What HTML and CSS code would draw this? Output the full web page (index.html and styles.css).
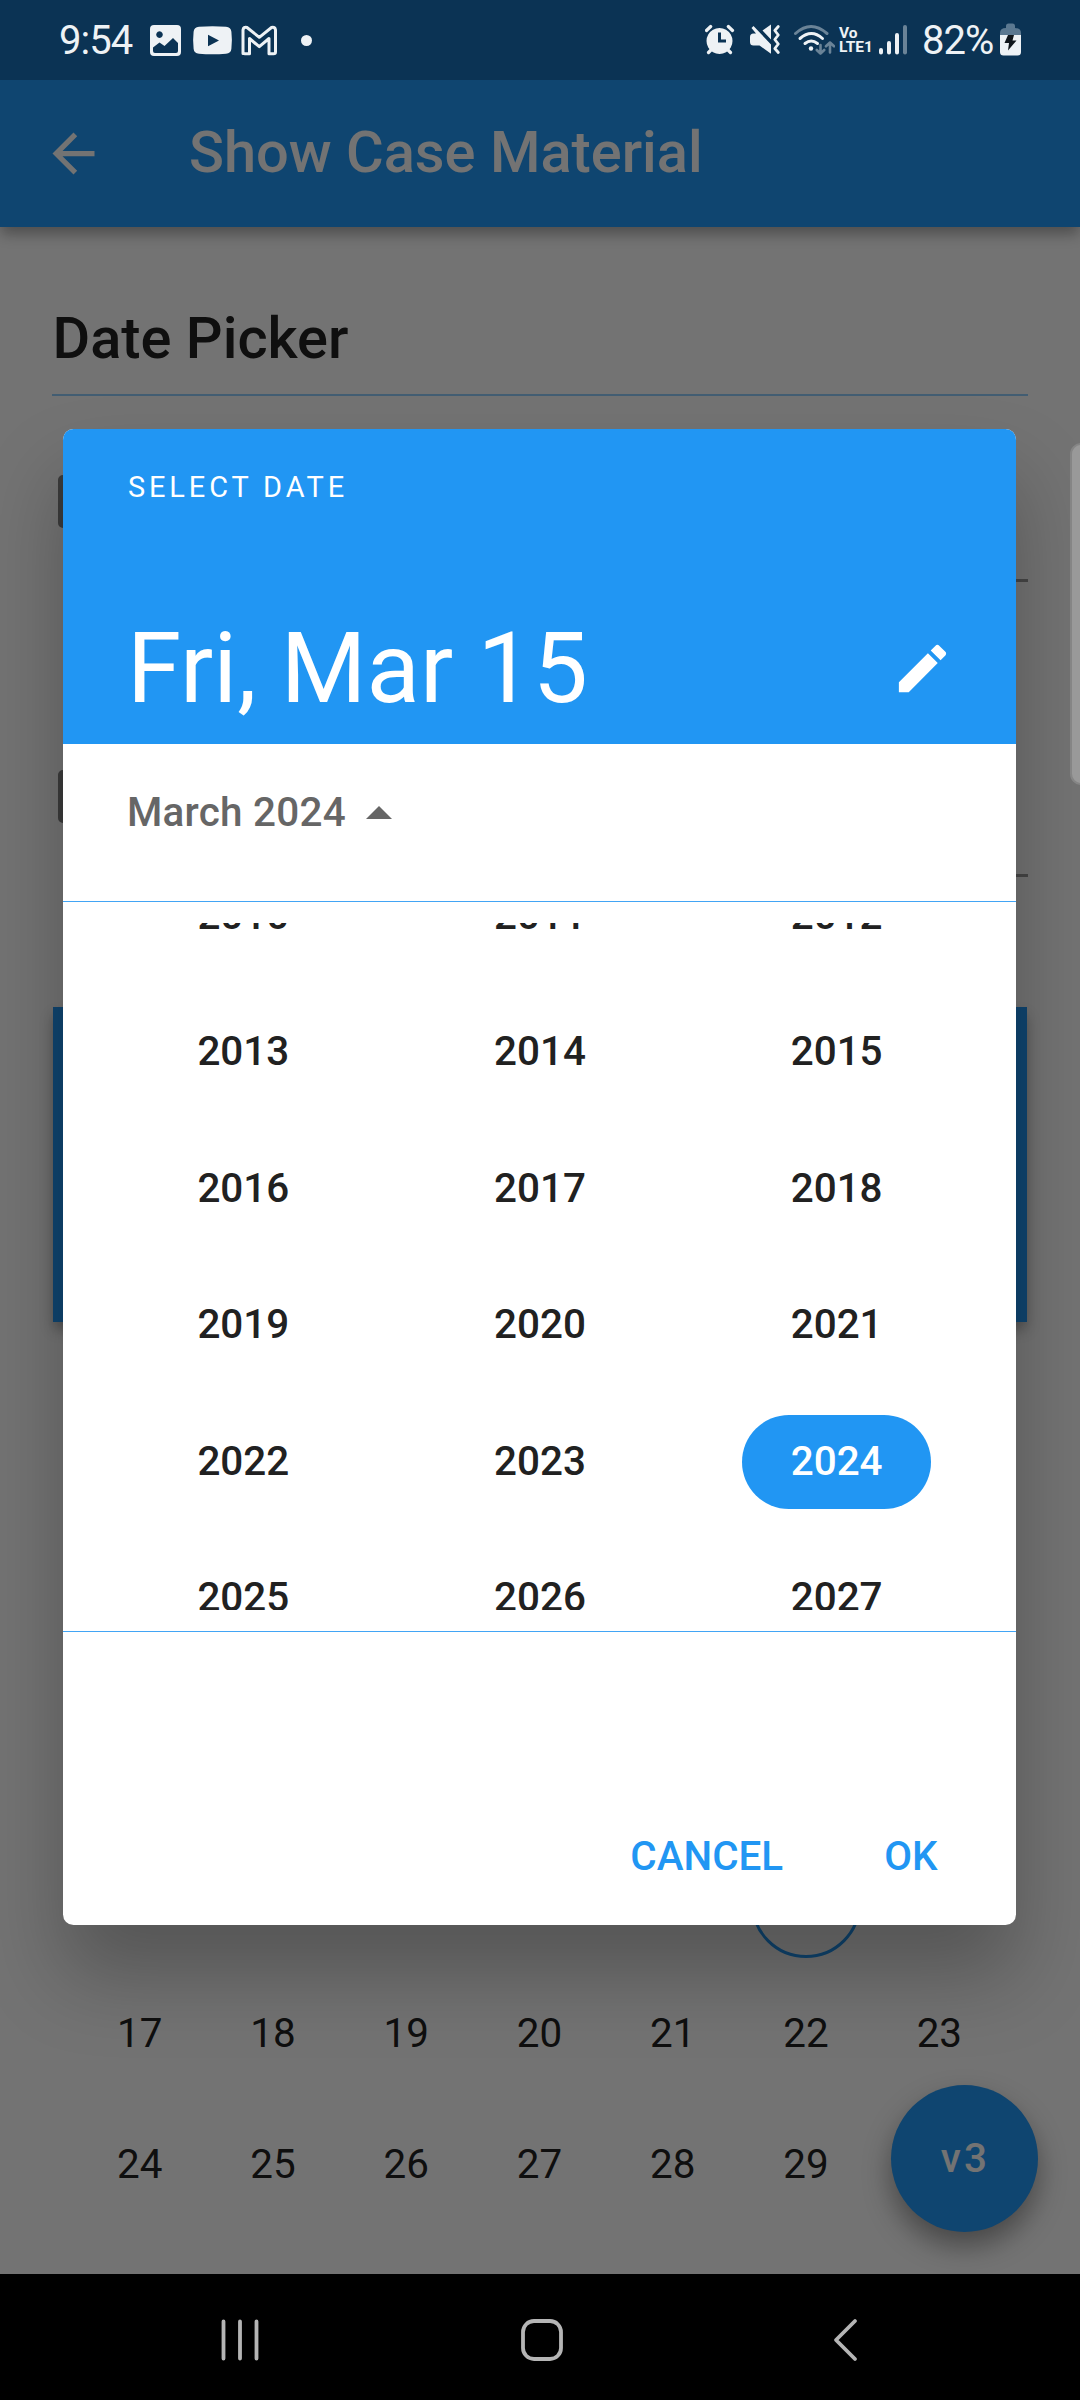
FILE: index.html
```html
<!DOCTYPE html>
<html lang="en">
<head>
<meta charset="utf-8">
<title>Show Case Material</title>
<link rel="stylesheet" href="styles.css">
</head>
<body>
<div class="screen">
  <div class="app">
    <header class="app-bar">
      <svg class="icon-24" viewBox="0 0 24 24"><path d="M20 11H7.83l5.59-5.59L12 4l-8 8 8 8 1.41-1.41L7.83 13H20v-2z"/></svg>
      <h1 class="app-title">Show Case Material</h1>
    </header>
    <main class="content">
      <h2 class="section-title">Date Picker</h2>
      <div class="field"><span class="field-icon"></span><span class="field-line"></span></div>
      <div class="field"><span class="field-icon"></span><span class="field-line"></span></div>
      <section class="calendar">
        <div class="calendar-header"></div>
        <div class="calendar-grid">
          <span class="day today"></span>
          <span class="day first">17</span><span class="day">18</span><span class="day">19</span><span class="day">20</span><span class="day">21</span><span class="day">22</span><span class="day">23</span>
          <span class="day">24</span><span class="day">25</span><span class="day">26</span><span class="day">27</span><span class="day">28</span><span class="day">29</span>
        </div>
      </section>
    </main>
    <button class="fab">v3</button>
  </div>

  <div class="scrim">
    <section class="dialog">
      <header class="dialog-header">
        <div class="dialog-label">SELECT DATE</div>
        <div class="dialog-date-row">
          <div class="dialog-date">Fri, Mar 15</div>
          <svg class="icon-24" viewBox="0 0 24 24"><path d="M3 17.25V21h3.75L17.81 9.94l-3.75-3.75L3 17.25zM20.71 7.04c.39-.39.39-1.02 0-1.41l-2.34-2.34c-.39-.39-1.02-.39-1.41 0l-1.83 1.83 3.75 3.75 1.83-1.83z"/></svg>
        </div>
      </header>
      <div class="month-row">
        <span>March 2024</span>
        <svg class="month-arrow" viewBox="0 0 26 13"><path d="M0 13L13 0l13 13z"/></svg>
      </div>
      <div class="years">
        <div class="years-scroll">
          <div class="years-grid">
            <span class="year">2010</span><span class="year">2011</span><span class="year">2012</span>
            <span class="year">2013</span><span class="year">2014</span><span class="year">2015</span>
            <span class="year">2016</span><span class="year">2017</span><span class="year">2018</span>
            <span class="year">2019</span><span class="year">2020</span><span class="year">2021</span>
            <span class="year">2022</span><span class="year">2023</span><span class="year selected">2024</span>
            <span class="year">2025</span><span class="year">2026</span><span class="year">2027</span>
          </div>
        </div>
      </div>
      <footer class="actions"><button class="action">CANCEL</button><button class="action">OK</button></footer>
    </section>
  </div>

  <div class="status-bar">
    <div class="status-left">
      <span class="clock">9:54</span>
      <svg class="status-svg" width="134" height="40" viewBox="150 20 134 40">
        <path fill-rule="evenodd" d="M154 25h23a4 4 0 0 1 4 4v23a4 4 0 0 1-4 4h-23a4 4 0 0 1-4-4v-23a4 4 0 0 1 4-4zM159.500 31.300a3.300 3.300 0 1 0 .01 0zM153 47.500V51q0 2 2 2h21q2 0 2-2v-8l-5-5-8.500 8-5-3.500z"/>
        <path fill-rule="evenodd" d="M199 26.800q13.500-1 27 0 5 .3 5.400 5 1 8.500 0 17-.4 4.700-5.400 5-13.500 1-27 0-5-.3-5.400-5-1-8.500 0-17 .4-4.700 5.400-5zM208 34.800v11.400l11-5.700z"/>
        <path class="line" stroke-width="3" d="M243 53.500V30q.5-3.500 4-2.500l12.300 9.800L271.500 27.500q3.500-1 4 2.500v22q0 1.800-2 1.800h-4.500V38.500L259.300 46.700 249.500 38.500V53.800H245q-2 0-2-2z"/>
      </svg>
      <span class="status-dot"></span>
    </div>
    <div class="status-right">
      <svg class="status-svg" width="130" height="40" viewBox="705 20 130 40">
        <path fill-rule="evenodd" d="M719.500 28a13 13 0 1 0 .01 0zM718 32.500h3v7h5v3h-8z"/>
        <path class="line" stroke-width="3.200" d="M706.500 30.500l4.200-4M732.500 30.500l-4.200-4M708.500 52.500l3-3M730.500 52.500l-3-3"/>
        <path d="M750 37q0-3.500 3.500-3.500h2.500L751.500 28l2-2L771 44.500v9.200l-11.500-8.200h-6q-3.500 0-3.500-3.500zM762.500 30.500l8.500-6v15z"/>
        <path class="line" stroke-width="2.800" d="M778.300 26.500l-3.500 4 3.500 4.500-3.500 4.500 3.500 4.500-3.500 4.500 3.500 4"/>
        <g class="line" stroke-width="3">
          <path class="dim" d="M795.500 33.500q15.500-14 31.500 0"/>
          <path d="M800 38.500q11.500-10 22.500 0"/>
          <path d="M805 43.500q6.200-5 12.500 0"/>
        </g>
        <circle cx="811" cy="48.500" r="2.200"/>
        <path class="line dim" stroke-width="2.600" d="M820.500 45v8.500M816.800 50l3.700 3.700 3.700-3.700M830 52.500V42.500M826 46.300l4-3.800 4 3.800"/>
      </svg>
      <span class="lte"><span>Vo</span><span>LTE1</span></span>
      <svg class="status-svg signal" width="28" height="40" viewBox="879 20 28 40">
        <path class="line" stroke-width="4" d="M881 50v2.500M889 43v9.500M897 35v17.500"/>
        <path class="line dim" stroke-width="4" d="M905 27v25.500"/>
      </svg>
      <span class="battery-text">82%</span>
      <svg class="status-svg" width="21" height="40" viewBox="1000 20 21 40">
        <path class="cell-empty" d="M1006 28v-2q0-2.500 2.500-2.500h4q2.500 0 2.500 2.500v2q6 0 6 5v2.500h-21V33q0-5 6-5z"/>
        <path d="M1000 35h21v17q0 3.500-3.500 3.500h-14q-3.500 0-3.500-3.500z"/>
        <path class="bolt" d="M1008 35h6l-1.500 5.500h4L1008 50.500l1-7.500h-4.500z"/>
      </svg>
    </div>
  </div>
  <div class="edge-handle"></div>

  <nav class="nav-bar">
    <svg class="nav-icon" viewBox="0 0 44 44"><path d="M5.500 3.500v37M22 3.500v37M38.500 3.500v37"/></svg>
    <svg class="nav-icon" viewBox="0 0 44 44"><rect x="2" y="3" width="38" height="38" rx="11"/></svg>
    <svg class="nav-icon" viewBox="0 0 44 44"><path d="M31 3L12 22l19 19"/></svg>
  </nav>
</div>
</body>
</html>
```
FILE: styles.css
```css
* { box-sizing: border-box; }
body {
  margin: 0;
  font-family: Roboto, "Liberation Sans", sans-serif;
  background: #000;
}
h1, h2 { margin: 0; font-weight: 500; }
button { border: 0; padding: 0; margin: 0; background: none; font: inherit; }
svg { display: block; flex: none; }

.screen {
  position: relative;
  width: 1080px;
  height: 2400px;
  display: flex;
  flex-direction: column;
  overflow: hidden;
}

/* page under the dialog */
.app {
  position: relative;
  height: 2274px;
  background: #fafafa;
  overflow: hidden;
}
.app-bar {
  position: relative;
  display: flex;
  align-items: center;
  gap: 84px;
  height: 227px;
  padding: 80px 42px 0;
  background: #2196f3;
  color: #fafafa;
  box-shadow: 0 8px 13px -1px rgba(0, 0, 0, .32);
}
.icon-24 { width: 63px; height: 63px; fill: currentColor; }
.app-title { font-size: 57.75px; line-height: 68px; padding-bottom: 3px; }

.content { padding: 0 52px; }
.section-title {
  padding: 77px 0 22px .5px;
  font-size: 57.75px;
  line-height: 68px;
  color: #212121;
  border-bottom: 2px solid #90caf9;
}
.field {
  display: flex;
  justify-content: space-between;
  height: 186px;
  padding: 79px 0 0 6px;
}
.field + .field { margin-top: 109px; }
.field-icon { width: 47px; height: 53px; border: 6px solid #808080; border-radius: 5px; }
.field-line { align-self: flex-end; width: 860px; height: 3px; background: #9a9a9a; }

.calendar { margin-top: 130px; }
.calendar-header {
  height: 315px;
  margin: 0 1px;
  background: #2196f3;
  box-shadow: 0 8px 13px -1px rgba(0, 0, 0, .32);
}
.calendar-grid {
  display: grid;
  grid-template-columns: repeat(7, 1fr);
  grid-auto-rows: 131px;
  padding: 515px 22px 0 21px;
}
.day {
  display: flex;
  align-items: center;
  justify-content: center;
  font-size: 40.4px;
  color: #212121;
}
.day.first { grid-column: 1; }
.day.today {
  grid-column: 6;
  place-self: center;
  width: 110px;
  height: 110px;
  border: 3px solid #2196f3;
  border-radius: 50%;
}
.fab {
  position: absolute;
  right: 42px;
  bottom: 42px;
  width: 147px;
  height: 147px;
  padding-left: 2px;
  border-radius: 50%;
  background: #2196f3;
  color: #fafafa;
  font-size: 40.4px;
  font-weight: 500;
  letter-spacing: 3.2px;
  box-shadow: 0 14px 28px rgba(0, 0, 0, .38);
}

/* modal layer */
.scrim {
  position: absolute;
  inset: 0 0 126px;
  display: flex;
  align-items: center;
  justify-content: center;
  padding: 80px 1px 0 0;
  background: rgba(0, 0, 0, .54);
}
.dialog {
  display: flex;
  flex-direction: column;
  width: 953px;
  height: 1496px;
  border-radius: 10.5px;
  overflow: hidden;
  background: #fff;
  box-shadow: 0 50px 80px rgba(0, 0, 0, .26);
}
.dialog-header {
  display: flex;
  flex-direction: column;
  justify-content: space-between;
  height: 315px;
  padding: 40px 62px 17px 64px;
  background: #2196f3;
  color: #fff;
}
.dialog-label { padding-left: 1px; font-size: 28.9px; line-height: 36px; letter-spacing: 3.9px; }
.dialog-date-row { display: flex; justify-content: space-between; align-items: center; }
.dialog-date-row .icon-24 { margin-bottom: 2px; }
.dialog-date { font-size: 98.2px; line-height: 116px; }

.month-row {
  display: flex;
  align-items: center;
  gap: 20px;
  height: 137px;
  padding: 0 64px 1px;
  font-size: 40.4px;
  font-weight: 500;
  letter-spacing: .26px;
  color: #666;
}
.month-arrow { width: 26px; height: 13px; fill: #666; }

.years {
  margin-top: 20px;
  padding: 21px 0;
  border-top: 1px solid #42a5f5;
  border-bottom: 1px solid #42a5f5;
}
.years-scroll { height: 687px; overflow: hidden; }
.years-grid {
  display: grid;
  grid-template-columns: repeat(3, 1fr);
  grid-auto-rows: 136.5px;
  column-gap: 21px;
  margin-top: -75.5px;
  padding: 0 41.5px 0 42.5px;
}
.year {
  place-self: center;
  display: flex;
  align-items: center;
  justify-content: center;
  width: 189px;
  height: 94.5px;
  padding-bottom: 1px;
  border-radius: 48px;
  font-size: 40.4px;
  font-weight: 500;
  color: #212121;
}
.year.selected { background: #2196f3; color: #fff; }

.actions {
  display: flex;
  justify-content: flex-end;
  gap: 101px;
  margin-top: auto;
  padding: 0 78.5px 45px 0;
}
.action { font-size: 40.4px; line-height: 47px; font-weight: 500; color: #2196f3; }

/* system status bar */
.status-bar {
  position: absolute;
  inset: 0 0 auto;
  display: flex;
  justify-content: space-between;
  height: 80px;
  padding: 0 59px 0 59px;
  background: rgba(0, 0, 0, .25);
  color: #eef2f5;
}
.status-left, .status-right { display: flex; align-items: center; }
.status-svg { fill: #eef2f5; }
.line { fill: none; stroke: #eef2f5; stroke-linecap: round; stroke-linejoin: round; }
.dim { opacity: .42; }
.cell-empty { fill: #5b7890; }
.bolt { fill: #10161b; }
.clock { width: 91px; font-size: 40px; letter-spacing: -1px; }
.status-dot { width: 11px; height: 11px; margin-left: 17px; border-radius: 50%; background: #eef2f5; }
.lte {
  display: flex;
  flex-direction: column;
  width: 40px;
  margin-left: 4px;
  font-size: 15.5px;
  line-height: 14px;
  font-weight: 700;
}
.battery-text { width: 78px; margin-left: 15px; font-size: 40px; letter-spacing: -1px; }

.edge-handle {
  position: absolute;
  top: 443px;
  right: -12px;
  width: 22px;
  height: 342px;
  border: 2px solid #858585;
  border-radius: 12px;
  background: #999;
}

/* system navigation */
.nav-bar {
  display: flex;
  justify-content: space-between;
  align-items: center;
  height: 126px;
  padding: 6px 212px 0 218px;
  background: #000;
}
.nav-icon {
  width: 44px;
  height: 44px;
  fill: none;
  stroke: #b5b5b5;
  stroke-width: 3.8;
  stroke-linecap: round;
  stroke-linejoin: round;
}
```
